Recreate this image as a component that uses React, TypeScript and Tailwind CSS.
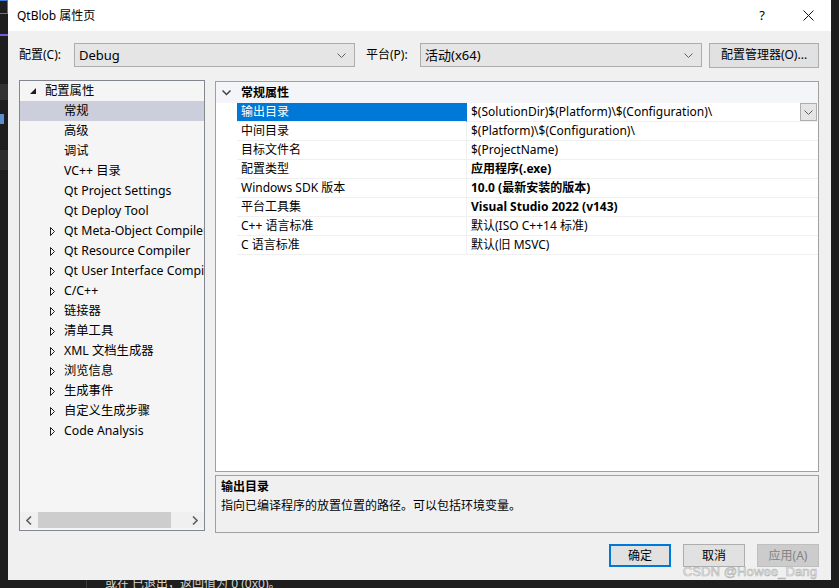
import React from 'react';

const FONT = "font-['Noto_Sans','Noto_Sans_CJK_SC',sans-serif]";

type TreeItem = { label: string; root?: boolean; arrow?: 'open' | 'closed'; selected?: boolean };

const treeItems: TreeItem[] = [
  { label: '配置属性', root: true, arrow: 'open' },
  { label: '常规', selected: true },
  { label: '高级' },
  { label: '调试' },
  { label: 'VC++ 目录' },
  { label: 'Qt Project Settings' },
  { label: 'Qt Deploy Tool' },
  { label: 'Qt Meta-Object Compiler', arrow: 'closed' },
  { label: 'Qt Resource Compiler', arrow: 'closed' },
  { label: 'Qt User Interface Compiler', arrow: 'closed' },
  { label: 'C/C++', arrow: 'closed' },
  { label: '链接器', arrow: 'closed' },
  { label: '清单工具', arrow: 'closed' },
  { label: 'XML 文档生成器', arrow: 'closed' },
  { label: '浏览信息', arrow: 'closed' },
  { label: '生成事件', arrow: 'closed' },
  { label: '自定义生成步骤', arrow: 'closed' },
  { label: 'Code Analysis', arrow: 'closed' },
];

const props = [
  { name: '输出目录', value: '$(SolutionDir)$(Platform)\\$(Configuration)\\' },
  { name: '中间目录', value: '$(Platform)\\$(Configuration)\\' },
  { name: '目标文件名', value: '$(ProjectName)' },
  { name: '配置类型', value: '应用程序(.exe)', bold: true },
  { name: 'Windows SDK 版本', value: '10.0 (最新安装的版本)', bold: true },
  { name: '平台工具集', value: 'Visual Studio 2022 (v143)', bold: true },
  { name: 'C++ 语言标准', value: '默认(ISO C++14 标准)' },
  { name: 'C 语言标准', value: '默认(旧 MSVC)' },
];

const Chevron = ({ className = '' }: { className?: string }) => (
  <svg width="9" height="5" viewBox="0 0 9 5" className={className}>
    <path d="M0.5 0.5 L4.5 4.5 L8.5 0.5" fill="none" stroke="#606060" strokeWidth="1" />
  </svg>
);

const Select = ({ value, width }: { value: string; width: string }) => (
  <div className={`${width} h-[24px] bg-[#e5e5e5] border border-[#adadad] flex items-center pl-[4px] pr-[8px]`}>
    <span className="flex-1 text-[13px] leading-none">{value}</span>
    <Chevron />
  </div>
);

const Button = ({ children, primary, disabled }: { children: React.ReactNode; primary?: boolean; disabled?: boolean }) => (
  <div
    className={`w-[62px] h-[23px] flex items-center justify-center text-[12px] ${
      primary
        ? 'border-2 border-[#0078d7] bg-[#e1e1e1]'
        : disabled
        ? 'border border-[#bfbfbf] bg-[#cccccc] text-[#838383]'
        : 'border border-[#adadad] bg-[#e1e1e1]'
    }`}
  >
    {children}
  </div>
);

function Tree() {
  return (
    <div className="w-[186px] h-[451px] border border-[#828790] bg-[#f5f5f5] flex flex-col">
      <div className="flex-1 overflow-hidden">
        {treeItems.map((t) => (
          <div
            key={t.label}
            className={`h-[20px] flex items-center whitespace-nowrap text-[12.3px] ${t.selected ? 'bg-[#cccedb]' : ''}`}
          >
            {t.root ? (
              <>
                <span className="w-[25px] shrink-0 pl-[10px] flex items-center">
                  <svg width="6" height="6" viewBox="0 0 6 6">
                    <path d="M6 0 L6 6 L0 6 Z" fill="#1e1e1e" />
                  </svg>
                </span>
                <span>{t.label}</span>
              </>
            ) : (
              <>
                <span className="w-[44px] shrink-0 pl-[30px] flex items-center">
                  {t.arrow === 'closed' && (
                    <svg width="5" height="9" viewBox="0 0 5 9">
                      <path d="M0.5 0.5 L4.5 4.5 L0.5 8.5 Z" fill="none" stroke="#1e1e1e" strokeWidth="1" />
                    </svg>
                  )}
                </span>
                <span>{t.label}</span>
              </>
            )}
          </div>
        ))}
      </div>
      <div className="h-[16px] mb-[2px] bg-[#f0f0f0] flex items-center">
        <span className="w-[18px] flex justify-center">
          <svg width="6" height="9" viewBox="0 0 6 9">
            <path d="M5 0.5 L1 4.5 L5 8.5" fill="none" stroke="#606060" strokeWidth="1.6" />
          </svg>
        </span>
        <div className="w-[133px] h-[16px] bg-[#cdcdcd]" />
        <div className="flex-1" />
        <span className="w-[18px] flex justify-center">
          <svg width="6" height="9" viewBox="0 0 6 9">
            <path d="M1 0.5 L5 4.5 L1 8.5" fill="none" stroke="#606060" strokeWidth="1.6" />
          </svg>
        </span>
      </div>
    </div>
  );
}

function PropGrid() {
  return (
    <div className="h-[391px] border border-[#a0a0a0] bg-white flex flex-col">
      <div className="h-[21px] bg-[#f3f5f9] flex items-center">
        <span className="w-[22px] pl-[6px] flex items-center">
          <svg width="9" height="6" viewBox="0 0 9 6">
            <path d="M0.5 0.5 L4.5 4.5 L8.5 0.5" fill="none" stroke="#444" strokeWidth="1.5" />
          </svg>
        </span>
        <span className="pl-[3px] text-[12px] font-bold">常规属性</span>
      </div>
      {props.map((p, i) => (
        <div key={p.name} className="h-[19px] flex">
          <div className="w-[21px]" />
          <div
            className={`w-[230px] flex items-center pl-[4px] text-[12px] border-b border-r border-[#f0f0f0] ${
              i === 0 ? 'bg-[#0078d7] text-white border-r-[#0078d7]' : ''
            }`}
          >
            {p.name}
          </div>
          <div className={`flex-1 flex items-center pl-[4px] text-[12px] border-b border-[#f0f0f0] whitespace-nowrap ${p.bold ? 'font-bold' : ''}`}>
            <span className="flex-1">{p.value}</span>
            {i === 0 && (
              <div className="w-[17px] h-[18px] bg-[#e5e5e5] border border-[#adadad] flex items-center justify-center mr-[1px]">
                <Chevron />
              </div>
            )}
          </div>
        </div>
      ))}
    </div>
  );
}

export default function App() {
  return (
    <div className={`w-[839px] h-[588px] bg-[#1e1e1e] flex flex-col overflow-hidden ${FONT} text-black`}>
      <div className="flex h-[580px]">
        {/* dark editor strip on the left */}
        <div className="w-[8px] flex flex-col">
          <div className="h-[14px] border border-[#3d7bd9] border-l-0" />
          <div className="mt-[20px] h-[2px] bg-[#6d5fd6]" />
          <div className="mt-[48px] h-[16px] bg-[#333]" />
          <div className="mt-[14px] h-[10px] w-[4px] bg-[#5a8fd0]" />
          <div className="mt-[26px] h-[20px] bg-[#2d2d2d]" />
        </div>

        {/* dialog */}
        <div className="w-[823px] flex flex-col bg-[#f0f0f0]">
          <div className="h-[31px] bg-white flex items-center pl-[9px]">
            <span className="flex-1 text-[12px]">QtBlob 属性页</span>
            <span className="w-[46px] text-center text-[13px]">?</span>
            <span className="w-[46px] flex justify-center">
              <svg width="11" height="11" viewBox="0 0 11 11">
                <path d="M0.5 0.5 L10.5 10.5 M10.5 0.5 L0.5 10.5" stroke="#111" strokeWidth="1" />
              </svg>
            </span>
          </div>

          <div className="flex items-center h-[24px] mt-[12px] pl-[11px] pr-[12px] text-[12px]">
            <span className="w-[55px]">配置(C):</span>
            <Select value="Debug" width="w-[281px]" />
            <span className="ml-[11px] w-[54px]">平台(P):</span>
            <Select value="活动(x64)" width="w-[282px]" />
            <div className="ml-[7px] w-[110px] h-[25px] bg-[#e1e1e1] border border-[#adadad] flex items-center justify-center">
              配置管理器(O)...
            </div>
          </div>

          <div className="flex mt-[13px] pl-[11px] pr-[12px]">
            <Tree />
            <div className="ml-[10px] flex-1 flex flex-col mt-[1px]">
              <PropGrid />
              <div className="mt-[3px] h-[58px] border border-[#a0a0a0] bg-[#f0f0f0] pl-[5px] pt-[1px] text-[12px]">
                <div className="h-[19px] flex items-center font-bold">输出目录</div>
                <div className="h-[19px] flex items-center">指向已编译程序的放置位置的路径。可以包括环境变量。</div>
              </div>
            </div>
          </div>

          <div className="flex justify-end gap-[12px] mt-[11px] pr-[12px] relative">
            <Button primary>确定</Button>
            <Button>取消</Button>
            <Button disabled>应用(A)</Button>
            <span className="absolute right-[14px] top-[21px] text-[13.2px] leading-none text-[#f4f4f4] [-webkit-text-stroke:0.6px_#b4b4b4] font-['Liberation_Sans',sans-serif]">
              CSDN @Howee_Dang
            </span>
          </div>
        </div>

        <div className="flex-1" />
      </div>

      <div className="h-[8px] flex">
        <div className="w-[86px]" />
        <div className="w-[1px] bg-[#3c3c3c]" />
        <div className="ml-[18px] text-[12px] leading-[8px] text-[#d4d4d4] whitespace-nowrap overflow-hidden">
          或在 已退出，返回值为 0 (0x0)。
        </div>
      </div>
    </div>
  );
}
